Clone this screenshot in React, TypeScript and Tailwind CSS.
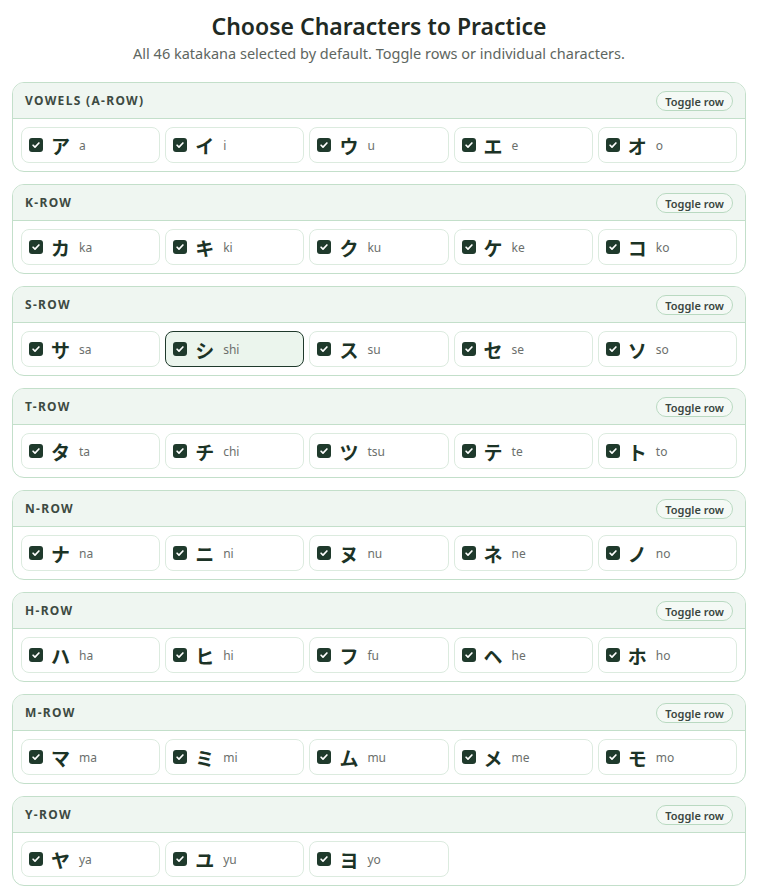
const rows: { label: string; chars: [string, string][] }[] = [
  { label: 'Vowels (a-row)', chars: [['ア', 'a'], ['イ', 'i'], ['ウ', 'u'], ['エ', 'e'], ['オ', 'o']] },
  { label: 'K-row', chars: [['カ', 'ka'], ['キ', 'ki'], ['ク', 'ku'], ['ケ', 'ke'], ['コ', 'ko']] },
  { label: 'S-row', chars: [['サ', 'sa'], ['シ', 'shi'], ['ス', 'su'], ['セ', 'se'], ['ソ', 'so']] },
  { label: 'T-row', chars: [['タ', 'ta'], ['チ', 'chi'], ['ツ', 'tsu'], ['テ', 'te'], ['ト', 'to']] },
  { label: 'N-row', chars: [['ナ', 'na'], ['ニ', 'ni'], ['ヌ', 'nu'], ['ネ', 'ne'], ['ノ', 'no']] },
  { label: 'H-row', chars: [['ハ', 'ha'], ['ヒ', 'hi'], ['フ', 'fu'], ['ヘ', 'he'], ['ホ', 'ho']] },
  { label: 'M-row', chars: [['マ', 'ma'], ['ミ', 'mi'], ['ム', 'mu'], ['メ', 'me'], ['モ', 'mo']] },
  { label: 'Y-row', chars: [['ヤ', 'ya'], ['ユ', 'yu'], ['ヨ', 'yo']] },
];

function CheckBox() {
  return (
    <span className="flex h-[14px] w-[14px] items-center justify-center rounded-[3px] bg-[#1f3a2c]">
      <svg width="10" height="10" viewBox="0 0 12 12" fill="none">
        <path d="M2.5 6.3l2.3 2.3 4.7-5" stroke="#ffffff" strokeWidth="2" strokeLinecap="round" strokeLinejoin="round" />
      </svg>
    </span>
  );
}

function CharTile({ kana, romaji, active }: { kana: string; romaji: string; active?: boolean }) {
  return (
    <label
      className={`flex h-[36px] items-center gap-[8px] rounded-[8px] border pl-[7px] pr-[8px] ${
        active ? 'border-[#1f3a2c] bg-[#ebf5ed]' : 'border-[#dcebdf] bg-white'
      }`}
    >
      <CheckBox />
      <span className="w-[19px] text-[19px] font-bold leading-none text-[#1c3326] [font-family:'Noto_Sans_CJK_JP',sans-serif]">
        {kana}
      </span>
      <span className="pl-[1px] pt-[2px] text-[12px] text-[#6b6f6c]">{romaji}</span>
    </label>
  );
}

export default function App() {
  return (
    <div className="min-h-screen bg-white px-[12px] pb-[8px] pt-[10px] text-[#1f2a24] [font-family:'Noto_Sans',sans-serif]">
      <h1 className="text-center text-[23px] font-semibold leading-[32px] text-[#1f2a24]">Choose Characters to Practice</h1>
      <p className="mt-[1px] text-center text-[14.5px] leading-[20px] text-[#5e6661]">
        All 46 katakana selected by default. Toggle rows or individual characters.
      </p>
      <div className="mt-[19px] flex flex-col gap-[12px]">
        {rows.map((row) => (
          <section key={row.label} className="overflow-hidden rounded-[12px] border border-[#c3dfca]">
            <div className="flex h-[36px] items-center justify-between border-b border-[#c3dfca] bg-[#eff6f1] pl-[12px] pr-[12px]">
              <span className="pt-[1px] text-[12px] font-bold uppercase tracking-[0.11em] text-[#3d4a42]">{row.label}</span>
              <button className="h-[20px] rounded-full border border-[#b9d9c1] bg-[#f4f9f5] px-[8px] pt-[1px] text-[11px] font-semibold leading-none text-[#3a4640]">
                Toggle row
              </button>
            </div>
            <div className="grid grid-cols-5 gap-[5px] px-[8px] py-[8px]">
              {row.chars.map(([k, r]) => (
                <CharTile key={k} kana={k} romaji={r} active={k === 'シ'} />
              ))}
            </div>
          </section>
        ))}
      </div>
    </div>
  );
}
